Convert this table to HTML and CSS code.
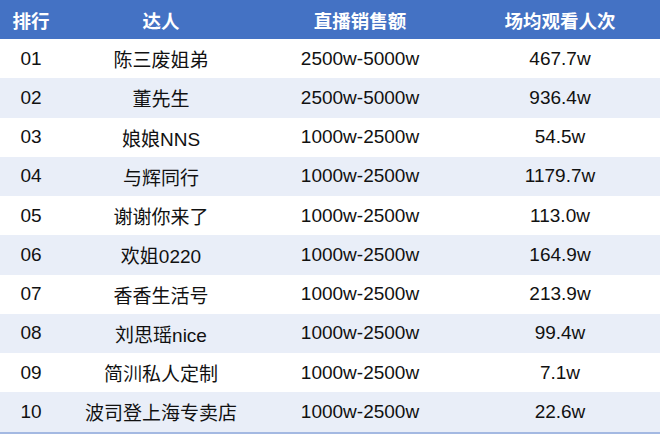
FILE: index.html
```html
<!DOCTYPE html>
<html lang="zh">
<head>
<meta charset="utf-8">
<link rel="stylesheet" href="styles.css">
</head>
<body>
<div class="table">
  <div class="row head">
    <div class="cell">排行</div>
    <div class="cell">达人</div>
    <div class="cell">直播销售额</div>
    <div class="cell">场均观看人次</div>
  </div>
  <div class="row"><div class="cell">01</div><div class="cell">陈三废姐弟</div><div class="cell">2500w-5000w</div><div class="cell">467.7w</div></div>
  <div class="row alt"><div class="cell">02</div><div class="cell">董先生</div><div class="cell">2500w-5000w</div><div class="cell">936.4w</div></div>
  <div class="row"><div class="cell">03</div><div class="cell">娘娘NNS</div><div class="cell">1000w-2500w</div><div class="cell">54.5w</div></div>
  <div class="row alt"><div class="cell">04</div><div class="cell">与辉同行</div><div class="cell">1000w-2500w</div><div class="cell">1179.7w</div></div>
  <div class="row"><div class="cell">05</div><div class="cell">谢谢你来了</div><div class="cell">1000w-2500w</div><div class="cell">113.0w</div></div>
  <div class="row alt"><div class="cell">06</div><div class="cell">欢姐0220</div><div class="cell">1000w-2500w</div><div class="cell">164.9w</div></div>
  <div class="row"><div class="cell">07</div><div class="cell">香香生活号</div><div class="cell">1000w-2500w</div><div class="cell">213.9w</div></div>
  <div class="row alt"><div class="cell">08</div><div class="cell">刘思瑶nice</div><div class="cell">1000w-2500w</div><div class="cell">99.4w</div></div>
  <div class="row"><div class="cell">09</div><div class="cell">简汌私人定制</div><div class="cell">1000w-2500w</div><div class="cell">7.1w</div></div>
  <div class="row alt last"><div class="cell">10</div><div class="cell">波司登上海专卖店</div><div class="cell">1000w-2500w</div><div class="cell">22.6w</div></div>
</div>
</body>
</html>
```

FILE: styles.css
```css
html, body {
  margin: 0;
  padding: 0;
  background: #ffffff;
}
body {
  font-family: "Liberation Sans", "Noto Sans CJK SC", sans-serif;
  color: #111111;
}
.table {
  width: 660px;
  display: flex;
  flex-direction: column;
}
.row {
  display: grid;
  grid-template-columns: 62px 198px 200px 200px;
  height: 39.25px;
  font-size: 19px;
  background: #ffffff;
}
.row.alt {
  background: #e9eef8;
}
.row.head {
  height: 39px;
  background: #4472c4;
  color: #ffffff;
  font-weight: bold;
  font-size: 18.5px;
  font-family: "Noto Sans CJK SC", sans-serif;
}
.row.last {
  border-bottom: 2px solid #a4b9e2;
}
.cell {
  display: flex;
  align-items: center;
  justify-content: center;
  white-space: nowrap;
}
```
